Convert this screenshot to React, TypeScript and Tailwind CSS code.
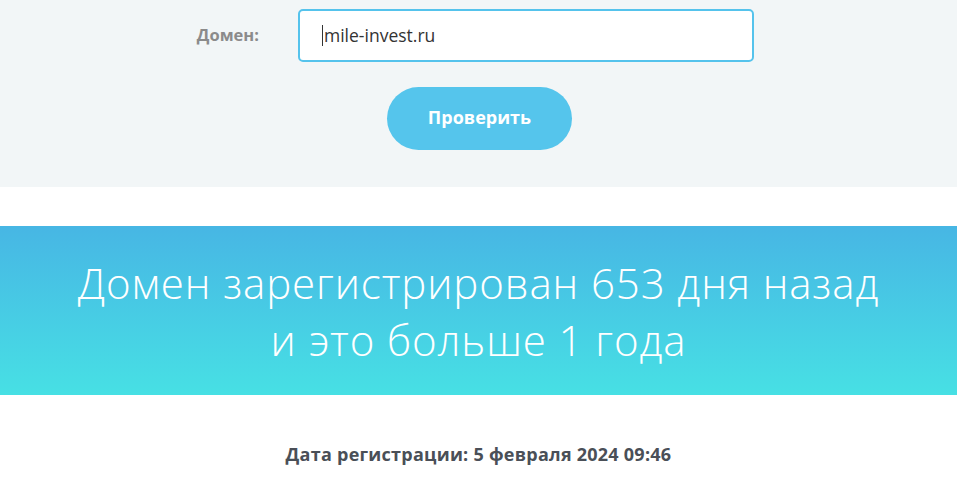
export default function App() {
  return (
    <div className="min-h-[480px] w-full bg-white font-['Open_Sans',sans-serif]">
      {/* форма проверки */}
      <section className="h-[187px] bg-[#f2f6f7] pt-[9px]">
        <div className="flex items-center">
          <label className="w-[298px] pr-[39px] text-right text-[16.5px] font-bold text-[#8b8b8b]">Домен:</label>
          <div className="flex h-[53px] w-[456px] items-center rounded-[5px] border-2 border-[#55c3ec] bg-white pl-[22px] text-[17.5px] text-[#333]">
            <span className="mr-px h-[21px] w-px bg-[#333]" />
            mile-invest.ru
          </div>
        </div>
        <div className="mt-[25px] flex pl-[387px]">
          <button className="h-[63px] w-[185px] rounded-full bg-[#55c5ec] pb-[2px] text-[18px] font-bold text-white">Проверить</button>
        </div>
      </section>

      <div className="h-[39px]" />

      <section className="flex h-[169px] flex-col items-center justify-center bg-gradient-to-b from-[#47b6e4] to-[#47e0e4] text-center text-[42px] leading-[57px] font-light tracking-[0.9px] text-white">
        <p>Домен зарегистрирован 653 дня назад</p>
        <p>и это больше 1 года</p>
      </section>

      <p className="mt-[46px] text-center text-[18px] font-bold tracking-[0.25px] text-[#4a4f57]">Дата регистрации: 5 февраля 2024 09:46</p>
    </div>
  )
}
